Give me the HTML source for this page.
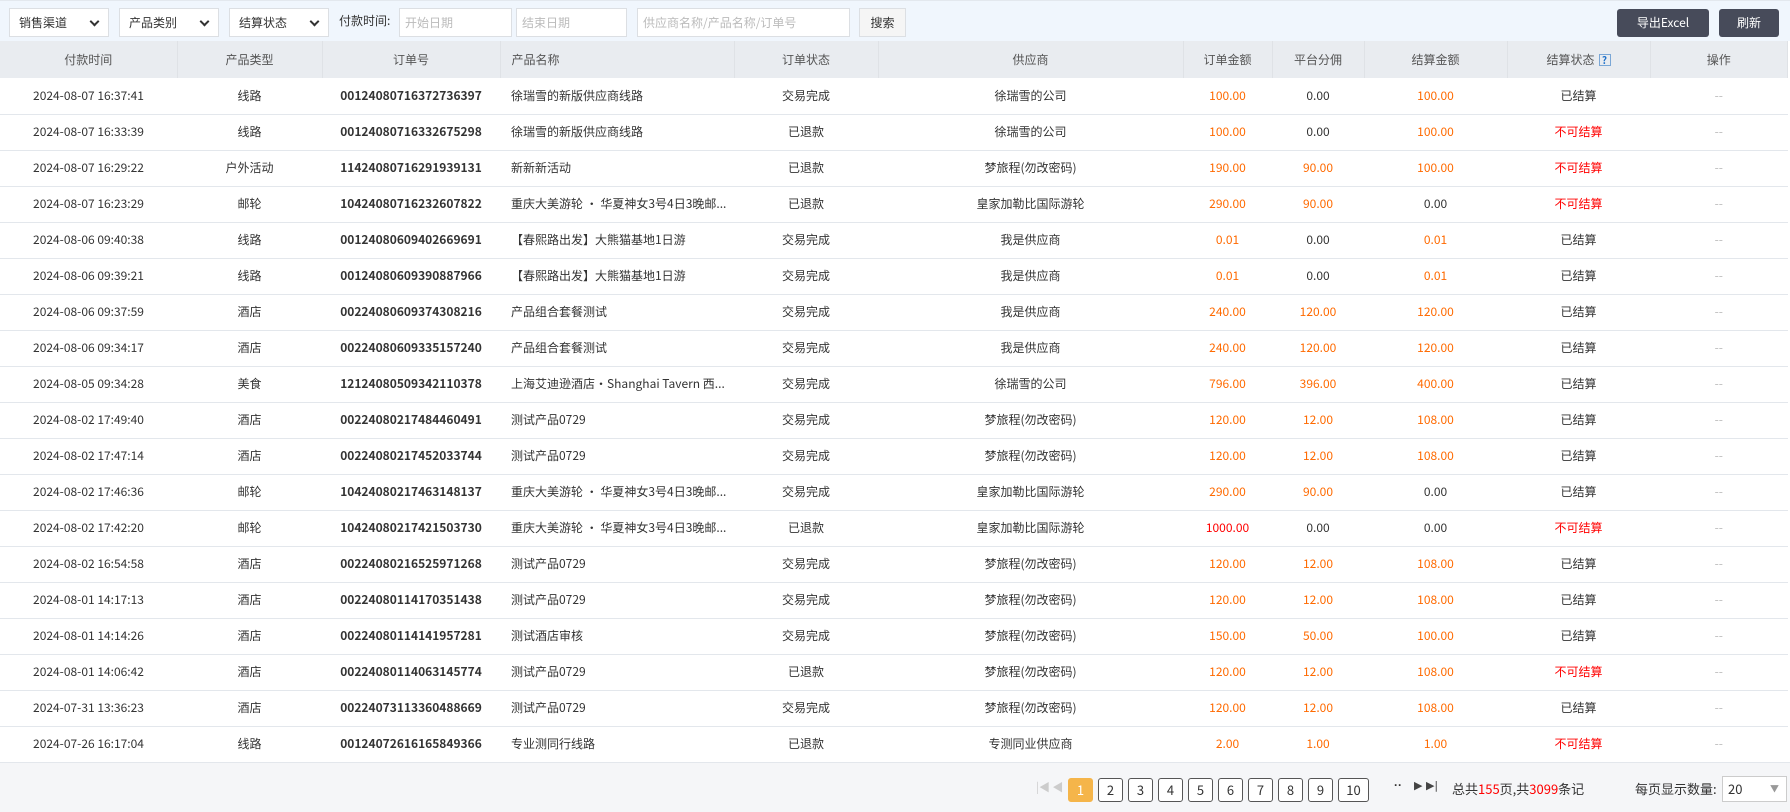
<!DOCTYPE html><html><head><meta charset="utf-8"><style>
*{box-sizing:border-box;margin:0;padding:0}
body{width:1790px;height:812px;overflow:hidden;background:#fff;font-family:"Noto Sans CJK SC","Liberation Sans",sans-serif;font-size:12px;color:#333;position:relative}
.tb{position:absolute;left:0;top:0;width:1790px;height:41px;background:#f0f6fd;border-top:1px solid #e3e8ee}
.sel,.inp,.btn{position:absolute;top:7px;height:29px;border:1px solid #dcdfe3;background:#fff;line-height:27px;padding-left:9px;font-size:12px}
.sel:after{content:"";position:absolute;right:10px;top:9px;width:5px;height:5px;border-right:2px solid #333;border-bottom:2px solid #333;transform:rotate(45deg)}
.inp{color:#bbb;padding-left:5px}
.btn{background:#f5f5f5;padding:0;text-align:center}
.dk{position:absolute;top:8px;height:28px;background:#474b5a;color:#fff;border-radius:3px;text-align:center;line-height:28px;font-size:12px}
table{position:absolute;left:0;top:41px;width:1788px;border-collapse:collapse;table-layout:fixed}
th{height:37px;background:#e9ecf0;font-weight:normal;color:#555;border-right:1px solid #dfe2e6;line-height:16px}
td{height:36px;text-align:center;border-bottom:1px solid #e3e7ec;white-space:nowrap;overflow:hidden;line-height:16px}
td.l,th.l{text-align:left;padding-left:11px}
td.b{font-weight:bold}
.o{color:#ff6a00}.r{color:#f00}.g{color:#bbb}
.ft{position:absolute;left:0;top:762px;width:1790px;height:50px;background:#f5f6f8;border-top:1px solid #e3e7ec}
.pg{position:absolute;top:15px;width:25px;height:24px;border:1px solid #555;border-radius:3px;text-align:center;line-height:22px;font-size:13px;background:#fff}
.q{display:inline-block;width:12px;height:12px;border:1px solid #7aa7d6;color:#1a6ec9;font-size:10px;line-height:10px;font-weight:bold;vertical-align:middle;margin-left:4px}
</style></head><body>
<div class="tb">
<div class="sel" style="left:9px;width:100px">销售渠道</div>
<div class="sel" style="left:119px;width:100px">产品类别</div>
<div class="sel" style="left:229px;width:100px">结算状态</div>
<div style="position:absolute;left:339px;top:11px">付款时间:</div>
<div class="inp" style="left:399px;width:113px">开始日期</div>
<div class="inp" style="left:516px;width:111px">结束日期</div>
<div class="inp" style="left:637px;width:213px">供应商名称/产品名称/订单号</div>
<div class="btn" style="left:859px;width:47px">搜索</div>
<div class="dk" style="left:1617px;width:92px">导出Excel</div>
<div class="dk" style="left:1719px;width:60px">刷新</div>
</div>
<table>
<colgroup><col style="width:177px"><col style="width:145px"><col style="width:178px"><col style="width:234px"><col style="width:144px"><col style="width:305px"><col style="width:89px"><col style="width:92px"><col style="width:143px"><col style="width:143px"><col></colgroup>
<tr><th>付款时间</th><th>产品类型</th><th>订单号</th><th class="l">产品名称</th><th>订单状态</th><th>供应商</th><th>订单金额</th><th>平台分佣</th><th>结算金额</th><th>结算状态<span class="q">?</span></th><th>操作</th></tr>
<tr><td>2024-08-07 16:37:41</td><td>线路</td><td class="b">00124080716372736397</td><td class="l">徐瑞雪的新版供应商线路</td><td>交易完成</td><td>徐瑞雪的公司</td><td class="o">100.00</td><td>0.00</td><td class="o">100.00</td><td>已结算</td><td class="g">--</td></tr>
<tr><td>2024-08-07 16:33:39</td><td>线路</td><td class="b">00124080716332675298</td><td class="l">徐瑞雪的新版供应商线路</td><td>已退款</td><td>徐瑞雪的公司</td><td class="o">100.00</td><td>0.00</td><td class="o">100.00</td><td class="r">不可结算</td><td class="g">--</td></tr>
<tr><td>2024-08-07 16:29:22</td><td>户外活动</td><td class="b">11424080716291939131</td><td class="l">新新新活动</td><td>已退款</td><td>梦旅程(勿改密码)</td><td class="o">190.00</td><td class="o">90.00</td><td class="o">100.00</td><td class="r">不可结算</td><td class="g">--</td></tr>
<tr><td>2024-08-07 16:23:29</td><td>邮轮</td><td class="b">10424080716232607822</td><td class="l">重庆大美游轮 · 华夏神女3号4日3晚邮...</td><td>已退款</td><td>皇家加勒比国际游轮</td><td class="o">290.00</td><td class="o">90.00</td><td>0.00</td><td class="r">不可结算</td><td class="g">--</td></tr>
<tr><td>2024-08-06 09:40:38</td><td>线路</td><td class="b">00124080609402669691</td><td class="l">【春熙路出发】大熊猫基地1日游</td><td>交易完成</td><td>我是供应商</td><td class="o">0.01</td><td>0.00</td><td class="o">0.01</td><td>已结算</td><td class="g">--</td></tr>
<tr><td>2024-08-06 09:39:21</td><td>线路</td><td class="b">00124080609390887966</td><td class="l">【春熙路出发】大熊猫基地1日游</td><td>交易完成</td><td>我是供应商</td><td class="o">0.01</td><td>0.00</td><td class="o">0.01</td><td>已结算</td><td class="g">--</td></tr>
<tr><td>2024-08-06 09:37:59</td><td>酒店</td><td class="b">00224080609374308216</td><td class="l">产品组合套餐测试</td><td>交易完成</td><td>我是供应商</td><td class="o">240.00</td><td class="o">120.00</td><td class="o">120.00</td><td>已结算</td><td class="g">--</td></tr>
<tr><td>2024-08-06 09:34:17</td><td>酒店</td><td class="b">00224080609335157240</td><td class="l">产品组合套餐测试</td><td>交易完成</td><td>我是供应商</td><td class="o">240.00</td><td class="o">120.00</td><td class="o">120.00</td><td>已结算</td><td class="g">--</td></tr>
<tr><td>2024-08-05 09:34:28</td><td>美食</td><td class="b">12124080509342110378</td><td class="l">上海艾迪逊酒店·Shanghai Tavern 西...</td><td>交易完成</td><td>徐瑞雪的公司</td><td class="o">796.00</td><td class="o">396.00</td><td class="o">400.00</td><td>已结算</td><td class="g">--</td></tr>
<tr><td>2024-08-02 17:49:40</td><td>酒店</td><td class="b">00224080217484460491</td><td class="l">测试产品0729</td><td>交易完成</td><td>梦旅程(勿改密码)</td><td class="o">120.00</td><td class="o">12.00</td><td class="o">108.00</td><td>已结算</td><td class="g">--</td></tr>
<tr><td>2024-08-02 17:47:14</td><td>酒店</td><td class="b">00224080217452033744</td><td class="l">测试产品0729</td><td>交易完成</td><td>梦旅程(勿改密码)</td><td class="o">120.00</td><td class="o">12.00</td><td class="o">108.00</td><td>已结算</td><td class="g">--</td></tr>
<tr><td>2024-08-02 17:46:36</td><td>邮轮</td><td class="b">10424080217463148137</td><td class="l">重庆大美游轮 · 华夏神女3号4日3晚邮...</td><td>交易完成</td><td>皇家加勒比国际游轮</td><td class="o">290.00</td><td class="o">90.00</td><td>0.00</td><td>已结算</td><td class="g">--</td></tr>
<tr><td>2024-08-02 17:42:20</td><td>邮轮</td><td class="b">10424080217421503730</td><td class="l">重庆大美游轮 · 华夏神女3号4日3晚邮...</td><td>已退款</td><td>皇家加勒比国际游轮</td><td class="r">1000.00</td><td>0.00</td><td>0.00</td><td class="r">不可结算</td><td class="g">--</td></tr>
<tr><td>2024-08-02 16:54:58</td><td>酒店</td><td class="b">00224080216525971268</td><td class="l">测试产品0729</td><td>交易完成</td><td>梦旅程(勿改密码)</td><td class="o">120.00</td><td class="o">12.00</td><td class="o">108.00</td><td>已结算</td><td class="g">--</td></tr>
<tr><td>2024-08-01 14:17:13</td><td>酒店</td><td class="b">00224080114170351438</td><td class="l">测试产品0729</td><td>交易完成</td><td>梦旅程(勿改密码)</td><td class="o">120.00</td><td class="o">12.00</td><td class="o">108.00</td><td>已结算</td><td class="g">--</td></tr>
<tr><td>2024-08-01 14:14:26</td><td>酒店</td><td class="b">00224080114141957281</td><td class="l">测试酒店审核</td><td>交易完成</td><td>梦旅程(勿改密码)</td><td class="o">150.00</td><td class="o">50.00</td><td class="o">100.00</td><td>已结算</td><td class="g">--</td></tr>
<tr><td>2024-08-01 14:06:42</td><td>酒店</td><td class="b">00224080114063145774</td><td class="l">测试产品0729</td><td>已退款</td><td>梦旅程(勿改密码)</td><td class="o">120.00</td><td class="o">12.00</td><td class="o">108.00</td><td class="r">不可结算</td><td class="g">--</td></tr>
<tr><td>2024-07-31 13:36:23</td><td>酒店</td><td class="b">00224073113360488669</td><td class="l">测试产品0729</td><td>交易完成</td><td>梦旅程(勿改密码)</td><td class="o">120.00</td><td class="o">12.00</td><td class="o">108.00</td><td>已结算</td><td class="g">--</td></tr>
<tr><td>2024-07-26 16:17:04</td><td>线路</td><td class="b">00124072616165849366</td><td class="l">专业测同行线路</td><td>已退款</td><td>专测同业供应商</td><td class="o">2.00</td><td class="o">1.00</td><td class="o">1.00</td><td class="r">不可结算</td><td class="g">--</td></tr>
</table>
<div class="ft">
<span style="position:absolute;left:1036px;top:16px;color:#ccc;font-size:11px">|◀ ◀</span>
<div class="pg" style="left:1068px;background:#f5b54a;border-color:#f5b54a;color:#fff">1</div>
<div class="pg" style="left:1098px">2</div>
<div class="pg" style="left:1128px">3</div>
<div class="pg" style="left:1158px">4</div>
<div class="pg" style="left:1188px">5</div>
<div class="pg" style="left:1218px">6</div>
<div class="pg" style="left:1248px">7</div>
<div class="pg" style="left:1278px">8</div>
<div class="pg" style="left:1308px">9</div>
<div class="pg" style="left:1338px;width:31px">10</div>
<span style="position:absolute;left:1394px;top:15px;font-weight:bold;font-family:'Liberation Sans',sans-serif">··</span>
<span style="position:absolute;left:1414px;top:16px;color:#444;font-size:11px;font-family:'DejaVu Sans',sans-serif">▶ ▶|</span>
<span style="position:absolute;left:1452px;top:16px;font-size:13px">总共<span class="r">155</span>页,共<span class="r">3099</span>条记</span>
<span style="position:absolute;left:1635px;top:16px;font-size:13px">每页显示数量:</span>
<div style="position:absolute;left:1722px;top:13px;width:65px;height:26px;border:1px solid #ccc;background:#fff;line-height:24px;padding-left:5px;font-size:13px">20<span style="position:absolute;right:7px;top:0;color:#999;font-size:9px">▼</span></div>
</div>
</body></html>
